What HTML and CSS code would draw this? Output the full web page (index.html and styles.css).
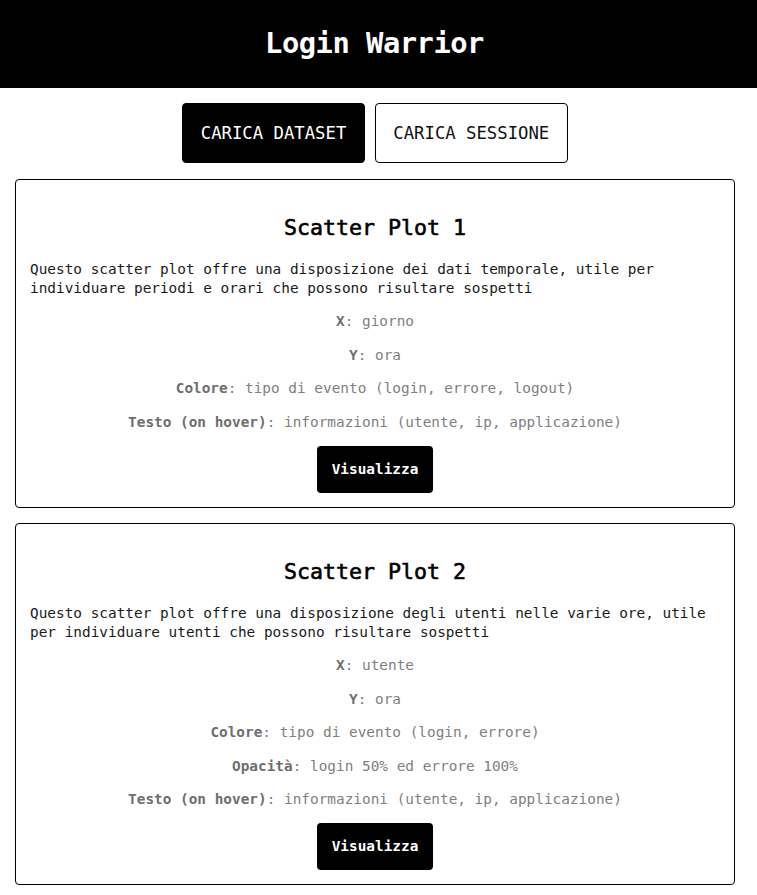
FILE: index.html
```html
<!DOCTYPE html>
<html lang="it">
<head>
<meta charset="utf-8">
<title>Login Warrior</title>
<link rel="stylesheet" href="styles.css">
</head>
<body>
<header class="topbar">
  <h1 class="brand">Login Warrior</h1>
</header>
<div class="page">
  <div class="actions">
    <button class="btn btn-dark">CARICA DATASET</button>
    <button class="btn btn-light">CARICA SESSIONE</button>
  </div>
  <section class="card">
    <h2 class="card-title">Scatter Plot 1</h2>
    <p class="desc">Questo scatter plot offre una disposizione dei dati temporale, utile per individuare periodi e orari che possono risultare sospetti</p>
    <p class="attr"><b>X</b>: giorno</p>
    <p class="attr"><b>Y</b>: ora</p>
    <p class="attr"><b>Colore</b>: tipo di evento (login, errore, logout)</p>
    <p class="attr"><b>Testo (on hover)</b>: informazioni (utente, ip, applicazione)</p>
    <div class="card-foot"><button class="view">Visualizza</button></div>
  </section>
  <section class="card">
    <h2 class="card-title">Scatter Plot 2</h2>
    <p class="desc">Questo scatter plot offre una disposizione degli utenti nelle varie ore, utile per individuare utenti che possono risultare sospetti</p>
    <p class="attr"><b>X</b>: utente</p>
    <p class="attr"><b>Y</b>: ora</p>
    <p class="attr"><b>Colore</b>: tipo di evento (login, errore)</p>
    <p class="attr"><b>Opacità</b>: login 50% ed errore 100%</p>
    <p class="attr"><b>Testo (on hover)</b>: informazioni (utente, ip, applicazione)</p>
    <div class="card-foot"><button class="view">Visualizza</button></div>
  </section>
</div>
</body>
</html>
```
FILE: styles.css
```css
* { box-sizing: border-box; }
html, body { margin: 0; padding: 0; background: #fff; }
body {
  font-family: "DejaVu Sans Mono", "Liberation Mono", monospace;
  font-size: 14.4px;
  color: #1a1a1a;
}
.topbar {
  background: #000;
  height: 88px;
  padding-right: 8px;
  display: flex;
  align-items: center;
  justify-content: center;
}
.brand {
  margin: 0 0 2px;
  color: #fff;
  font-size: 28.8px;
  font-weight: bold;
  line-height: 34px;
  letter-spacing: -0.5px;
}
.page {
  width: 749px;
  padding: 0 14px 20px 15px;
}
.actions {
  display: flex;
  justify-content: center;
  gap: 10px;
  margin: 15px 0 16px;
}
.btn {
  font-family: inherit;
  font-size: 17.28px;
  line-height: 23px;
  padding: 17.5px;
  border: 1px solid #000;
  border-radius: 4px;
  cursor: pointer;
}
.btn-dark { background: #000; color: #fff; }
.btn-light { background: #fff; color: #111; }
.card {
  border: 1px solid #000;
  border-radius: 4px;
  padding: 0 14px 14px;
  margin-bottom: 15px;
}
.card-title {
  font-size: 21.6px;
  font-weight: normal;
  -webkit-text-stroke: 0.6px #000;
  line-height: 28px;
  text-align: center;
  margin: 34px 0 18px;
  color: #000;
}
.card p { margin: 14.4px 0; line-height: 19px; }
.desc { color: #1a1a1a; }
.attr { text-align: center; color: #808080; }
.attr b { color: #6e6e6e; font-weight: bold; }
.card-foot { display: flex; justify-content: center; }
.view {
  font-family: inherit;
  font-size: 14.4px;
  font-weight: bold;
  line-height: 19px;
  color: #fff;
  background: #000;
  border: none;
  border-radius: 4px;
  padding: 14px 14.4px;
  cursor: pointer;
}
```
